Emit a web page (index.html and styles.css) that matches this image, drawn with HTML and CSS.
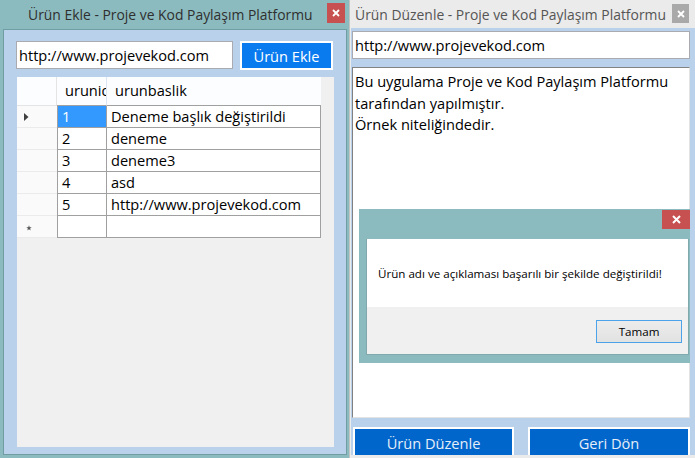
FILE: index.html
```html
<!DOCTYPE html>
<html lang="tr">
<head>
<meta charset="utf-8">
<title>Ürün Ekle / Ürün Düzenle</title>
<link rel="stylesheet" href="styles.css">
</head>
<body>
<div class="desktop">
  <div class="win win-add">
    <div class="titlebar">
      <span class="title">Ürün Ekle - Proje ve Kod Paylaşım Platformu</span>
      <span class="close close-red"><svg width="8" height="8" viewBox="0 0 8 8"><path d="M1 1L7 7M7 1L1 7" stroke="#fff" stroke-width="1.8"/></svg></span>
    </div>
    <div class="client client-add">
      <div class="toprow">
        <div class="textbox tb-url">http://www.projevekod.com</div>
        <div class="btn btn-add">Ürün Ekle</div>
      </div>
      <div class="dgv">
        <div class="dgv-grid">
          <div class="hc corner"></div>
          <div class="hc hc1">urunid</div>
          <div class="hc hc2">urunbaslik</div>

          <div class="rh"><svg width="5" height="8" viewBox="0 0 5 8"><path d="M0 0L4.5 4L0 8Z" fill="#404040"/></svg></div>
          <div class="c c1 sel">1</div>
          <div class="c c2">Deneme başlık değiştirildi</div>

          <div class="rh"></div>
          <div class="c c1">2</div>
          <div class="c c2">deneme</div>

          <div class="rh"></div>
          <div class="c c1">3</div>
          <div class="c c2">deneme3</div>

          <div class="rh"></div>
          <div class="c c1">4</div>
          <div class="c c2">asd</div>

          <div class="rh"></div>
          <div class="c c1">5</div>
          <div class="c c2">http://www.projevekod.com</div>

          <div class="rh rh-new"><svg width="6" height="6" viewBox="0 0 6 6"><path d="M3 0.3L3.7 2.2L5.7 2.2L4.1 3.4L4.7 5.4L3 4.2L1.3 5.4L1.9 3.4L0.3 2.2L2.3 2.2Z" fill="#555"/></svg></div>
          <div class="c c1"></div>
          <div class="c c2"></div>
        </div>
      </div>
    </div>
  </div>

  <div class="win win-edit">
    <div class="titlebar titlebar-inactive">
      <span class="title title-inactive">Ürün Düzenle - Proje ve Kod Paylaşım Platformu</span>
      <span class="close close-gray"><svg width="8" height="8" viewBox="0 0 8 8"><path d="M1 1L7 7M7 1L1 7" stroke="#fff" stroke-width="1.8"/></svg></span>
    </div>
    <div class="client client-edit">
      <div class="textbox tb-url2">http://www.projevekod.com</div>
      <div class="multiline">Bu uygulama Proje ve Kod Paylaşım Platformu<br>tarafından yapılmıştır.<br>Örnek niteliğindedir.</div>
      <div class="btnrow">
        <div class="btn btn-dark btn-edit">Ürün Düzenle</div>
        <div class="btn btn-dark btn-back">Geri Dön</div>
      </div>
    </div>

    <div class="msgbox">
      <div class="msg-title">
        <span class="msg-close"><svg width="9" height="9" viewBox="0 0 9 9"><path d="M1 1L8 8M8 1L1 8" stroke="#fff" stroke-width="2"/></svg></span>
      </div>
      <div class="msg-body">
        <div class="msg-text">Ürün adı ve açıklaması başarılı bir şekilde değiştirildi!</div>
        <div class="msg-foot">
          <div class="msg-btn">Tamam</div>
        </div>
      </div>
    </div>
  </div>
</div>
</body>
</html>
```

FILE: styles.css
```css
html, body {
  margin: 0;
  padding: 0;
}
body {
  width: 695px;
  height: 458px;
  overflow: hidden;
  font-family: "Open Sans", "Noto Sans", "DejaVu Sans", sans-serif;
  font-size: 14.6px;
  color: #000;
}
.desktop {
  display: flex;
  width: 695px;
  height: 458px;
}

/* ---------- generic window ---------- */
.win {
  height: 458px;
  display: flex;
  flex-direction: column;
  box-sizing: border-box;
}
.titlebar {
  height: 29px;
  flex: none;
  display: flex;
  align-items: flex-start;
}
.title {
  flex: 1;
  line-height: 29px;
  font-size: 13.9px;
  white-space: nowrap;
  overflow: hidden;
  color: #2f2f2f;
}
.close {
  width: 18px;
  height: 20px;
  margin-top: 3px;
  display: flex;
  align-items: center;
  justify-content: center;
  flex: none;
}
.close-red { background: #c75050; }
.close-gray { background: #a9a9a9; }

/* ---------- left window ---------- */
.win-add {
  width: 349px;
  background: #8cbbbf;
}
.win-add .titlebar { padding-right: 4px; }
.win-add .title { padding-left: 28px; }
.client-add {
  flex: 1;
  margin: 0 2px 3px 3px;
  border: 1px solid #6f9da2;
  background: #b9d1ea;
  display: flex;
  flex-direction: column;
  padding: 11px 0 7px 0;
}
.toprow {
  display: flex;
  gap: 7px;
  padding-left: 12px;
  height: 29px;
}
.textbox {
  box-sizing: border-box;
  background: #fff;
  border: 1px solid #a9abb0;
  padding-left: 2px;
  line-height: 26px;
  white-space: nowrap;
}
.tb-url {
  width: 217px;
  height: 28px;
}
.btn {
  box-sizing: border-box;
  display: flex;
  align-items: center;
  justify-content: center;
  color: #fff;
  white-space: nowrap;
}
.btn-add {
  width: 93px;
  height: 29px;
  border: 2px solid #fff;
  background: #0a7bef;
}

/* DataGridView */
.dgv {
  margin: 7px 0 0 13px;
  width: 317px;
  flex: 1;
  background: #f0f0f0;
}
.dgv-grid {
  display: grid;
  grid-template-columns: 40px 50px 214px;
  grid-template-rows: 29px repeat(6, 22px);
}
.hc {
  box-sizing: border-box;
  background: #fcfdff;
  border-bottom: 1px solid #a0a0a0;
  white-space: nowrap;
  overflow: hidden;
  line-height: 27px;
  padding-left: 9px;
}
.corner {
  border-bottom: 1px solid #e4e4e4;
  border-right: 1px solid #e4e4e4;
}
.hc1 {
  border-right: 1px solid #dce6f2;
  padding-left: 8px;
}
.hc2 {
  padding-left: 8px;
}
.rh {
  box-sizing: border-box;
  background: #fafafa;
  border-bottom: 1px solid #ebebeb;
  display: flex;
  align-items: center;
  padding-left: 7px;
}
.rh-new { padding-left: 9px; padding-top: 2px; }
.c {
  box-sizing: border-box;
  background: #fff;
  border-bottom: 1px solid #a0a0a0;
  border-right: 1px solid #a0a0a0;
  line-height: 21px;
  white-space: nowrap;
  overflow: hidden;
  padding-left: 4px;
}
.c1 { border-left: 1px solid #a0a0a0; }
.sel {
  background: #3399ff;
  color: #fff;
}

/* ---------- right window ---------- */
.win-edit {
  flex: 1;
  background: #ebebeb;
  border-left: 1px solid #c4c4c4;
  position: relative;
}
.titlebar-inactive {
  height: 28px;
}
.title-inactive {
  line-height: 29px;
  padding-left: 5px;
  color: #555;
}
.close-gray {
  width: 17px;
  height: 19px;
  margin-top: 4px;
  margin-right: 6px;
}
.client-edit {
  margin-left: 1px;
  height: 427px;
  flex: none;
  background: #b9d1ea;
  display: flex;
  flex-direction: column;
  padding: 3px 0 0 1px;
  box-sizing: border-box;
}
.tb-url2 {
  width: 338px;
  height: 28px;
}
.multiline {
  box-sizing: border-box;
  margin-top: 8px;
  width: 338px;
  height: 351px;
  background: #fff;
  border: 1px solid;
  border-color: #828282 #e3e3e3 #e3e3e3 #828282;
  padding: 3px 0 0 2px;
  line-height: 21.5px;
  white-space: nowrap;
}
.btnrow {
  display: flex;
  gap: 14px;
  margin-top: 9px;
  padding-left: 1px;
}
.btn-dark {
  height: 28px;
  border: 2px solid #fff;
  border-bottom: none;
  background: #0066cc;
  color: #e6eef8;
  padding-top: 2px;
}
.btn-edit { width: 161px; }
.btn-back { width: 162px; }

/* message box overlay */
.msgbox {
  position: absolute;
  left: 9px;
  top: 209px;
  width: 331px;
  height: 154px;
  background: #8cbbbf;
  display: flex;
  flex-direction: column;
}
.msg-title {
  height: 30px;
  flex: none;
  display: flex;
  justify-content: flex-end;
  align-items: flex-start;
}
.msg-close {
  margin-top: 1px;
  width: 28px;
  height: 19px;
  background: #c75050;
  display: flex;
  align-items: center;
  justify-content: center;
}
.msg-body {
  flex: 1;
  margin: 0 1px 8px 7px;
  display: flex;
  flex-direction: column;
  border: 1px solid #7fa9ad;
  border-top: none;
}
.msg-text {
  height: 68px;
  background: #fff;
  display: flex;
  align-items: center;
  padding-left: 11px;
  font-size: 11.6px;
  white-space: nowrap;
}
.msg-foot {
  flex: 1;
  background: #f0f0f0;
  display: flex;
  justify-content: flex-end;
  align-items: flex-start;
  padding: 13px 6px 0 0;
}
.msg-btn {
  box-sizing: border-box;
  width: 86px;
  height: 23px;
  border: 1px solid #4da3ea;
  background: linear-gradient(#ececec, #e2e2e2);
  display: flex;
  align-items: center;
  justify-content: center;
  font-size: 11.6px;
}
```
